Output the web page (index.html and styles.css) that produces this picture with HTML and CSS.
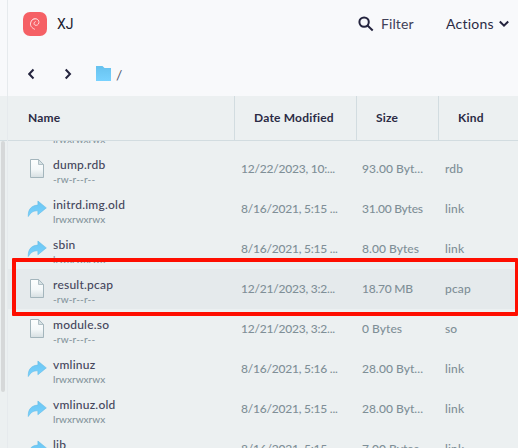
FILE: index.html
```html
<!DOCTYPE html>
<html lang="en">
<head>
<meta charset="utf-8">
<title>XJ</title>
<link rel="stylesheet" href="styles.css">
</head>
<body>
<svg width="0" height="0" class="defs">
  <defs>
    <linearGradient id="paper" x1="0" y1="0" x2="0" y2="1"><stop offset="0" stop-color="#fdfefe"/><stop offset=".55" stop-color="#f4f8f9"/><stop offset="1" stop-color="#d6dfe2"/></linearGradient>
    <linearGradient id="blue" x1="0" y1="0" x2="0" y2="1"><stop offset="0" stop-color="#6bc5f1"/><stop offset="1" stop-color="#78d2ff"/></linearGradient>
    <symbol id="file" viewBox="0 0 20 22"><path d="M3.500 1.500h8.100l4.900 5v13H3.500z" fill="url(#paper)" stroke="#a3b5bc"/><path d="M11.500 1.500v5h5z" fill="#d7e2e5" stroke="#a3b5bc" stroke-width=".8"/></symbol>
    <symbol id="link" viewBox="0 0 20 22"><path d="M10.900 3 19.300 9.900l-8.400 6.800v-3.900C6.600 12.600 3.800 14.300 1.300 18.500.8 11.600 4.300 7.400 10.900 7.100z" fill="url(#blue)" stroke="#63bce8" stroke-width=".6"/></symbol>
  </defs>
</svg>
<div class="app">
  <aside class="gutter">
    <div class="gutter-top"></div>
    <div class="gutter-head"></div>
    <div class="gutter-body"><div class="thumb"></div></div>
  </aside>
  <main class="panel">
    <header class="titlebar">
      <div class="host">
        <div class="logo"><svg width="24" height="24" viewBox="0 0 24 24" fill="none" stroke="#ffe5e6" stroke-width=".9" stroke-linecap="round"><path d="M11.500 17.200C8.500 15.800 7 13.600 7.600 11 8.200 8 10.200 6.500 12.600 6.700c2.200.2 3.600 1.900 3.300 4-.3 2.100-2.400 3.200-4 2.400-1.300-.7-1.300-2.900.4-3.500"/><path d="M9 8.200c1-1.200 2.500-1.700 4-1.300" stroke-width=".6"/></svg></div>
        <span class="host-name">XJ</span>
      </div>
      <div class="tools">
        <svg width="16" height="16" viewBox="0 0 16 16" fill="none" stroke="#24243e" stroke-width="2"><circle cx="6.100" cy="6.100" r="4.700"/><path d="m9.500 9.500 5.200 5"/></svg>
        <span class="filter">Filter</span>
        <span class="actions">Actions</span>
        <svg width="10" height="8" viewBox="0 0 10 8" fill="none" stroke="#24243e" stroke-width="2"><path d="m.8 1.500 4.200 4.200 4.200-4.200"/></svg>
      </div>
    </header>
    <nav class="pathbar">
      <svg class="back" width="8" height="12" viewBox="0 0 8 12" fill="none" stroke="#24243e" stroke-width="2"><path d="M5.500 1.500 1.200 6 5.500 10.500"/></svg>
      <svg class="fwd" width="8" height="12" viewBox="0 0 8 12" fill="none" stroke="#24243e" stroke-width="2"><path d="M1.700 1.500 6 6 1.700 10.500"/></svg>
      <svg class="folder" width="16" height="16" viewBox="0 0 16 16"><path d="M0 0h6.500l2 2H15v13H0z" fill="#67c3f0"/><path d="M0 2.500h15V15H0z" fill="url(#blue)"/></svg>
      <span class="slash">/</span>
    </nav>
    <section class="table">
      <div class="grid head"><div class="h-name">Name</div><div class="h-date">Date Modified</div><div class="h-size">Size</div><div class="h-kind">Kind</div></div>
      <div class="rows">
        <div class="grid row cut"><div class="name"><svg class="icon"></svg><div class="label"><b>&nbsp;</b><small>lrwxrwxrwx</small></div></div></div>
        <div class="grid row"><div class="name"><svg class="icon"><use href="#file"/></svg><div class="label"><b>dump.rdb</b><small class="rw">-rw-r--r--</small></div></div><div class="date">12/22/2023, 10:...</div><div class="size">93.00 Byt...</div><div class="kind">rdb</div></div>
        <div class="grid row"><div class="name"><svg class="icon"><use href="#link"/></svg><div class="label"><b>initrd.img.old</b><small>lrwxrwxrwx</small></div></div><div class="date">8/16/2021, 5:15 ...</div><div class="size full">31.00 Bytes</div><div class="kind">link</div></div>
        <div class="grid row"><div class="name"><svg class="icon"><use href="#link"/></svg><div class="label"><b>sbin</b><small>lrwxrwxrwx</small></div></div><div class="date">8/16/2021, 5:15 ...</div><div class="size">8.00 Bytes</div><div class="kind">link</div></div>
        <div class="grid row selected"><div class="name"><svg class="icon"><use href="#file"/></svg><div class="label"><b>result.pcap</b><small class="rw">-rw-r--r--</small></div></div><div class="date">12/21/2023, 3:2...</div><div class="size full">18.70 MB</div><div class="kind">pcap</div></div>
        <div class="grid row"><div class="name"><svg class="icon"><use href="#file"/></svg><div class="label"><b>module.so</b><small class="rw">-rw-r--r--</small></div></div><div class="date">12/21/2023, 3:2...</div><div class="size">0 Bytes</div><div class="kind">so</div></div>
        <div class="grid row"><div class="name"><svg class="icon"><use href="#link"/></svg><div class="label"><b>vmlinuz</b><small>lrwxrwxrwx</small></div></div><div class="date">8/16/2021, 5:16 ...</div><div class="size">28.00 Byt...</div><div class="kind">link</div></div>
        <div class="grid row"><div class="name"><svg class="icon"><use href="#link"/></svg><div class="label"><b>vmlinuz.old</b><small>lrwxrwxrwx</small></div></div><div class="date">8/16/2021, 5:15 ...</div><div class="size">28.00 Byt...</div><div class="kind">link</div></div>
        <div class="grid row"><div class="name"><svg class="icon"><use href="#link"/></svg><div class="label"><b>lib</b><small>lrwxrwxrwx</small></div></div><div class="date">8/16/2021, 5:15 ...</div><div class="size">7.00 Bytes</div><div class="kind">link</div></div>
      </div>
    </section>
  </main>
  <div class="marker"></div>
</div>
</body>
</html>
```
FILE: styles.css
```css
* { box-sizing: border-box; }
body { margin: 0; font-family: Lato, "Liberation Sans", sans-serif; color: #2b2b45; }
svg { display: block; flex: none; }
.defs { position: absolute; }
.app { position: relative; display: flex; width: 518px; height: 448px; overflow: hidden; background: #f8f9fb; }
.gutter { width: 8px; display: flex; flex-direction: column; border-right: 1px solid #e6eaed; }
.gutter-top { height: 96px; }
.gutter-head { height: 45px; background: #ecf0f1; border-bottom: 1px solid #d2dce0; }
.gutter-body { flex: 1; background: #ecf0f1; padding-left: 1px; }
.thumb { width: 4px; height: 251px; border-radius: 2px; background: #d6d8d9; }
.panel { flex: 1; display: flex; flex-direction: column; min-width: 0; }
.titlebar { height: 48px; display: flex; justify-content: space-between; padding: 0 9px 0 15px; align-items: center; }
.host, .tools { display: flex; align-items: center; }
.logo { width: 24px; height: 24px; border-radius: 7px; background: #f56065; }
.host-name { margin-left: 10px; font: 14px/20px Roboto, sans-serif; color: #20202f; }
.tools { font-size: 14px; line-height: 20px; }
.filter { width: 37px; margin: 0 28px 0 7px; color: #3f4058; letter-spacing: .1px; white-space: nowrap; }
.actions { width: 53px; letter-spacing: .25px; white-space: nowrap; }
.pathbar { height: 48px; display: flex; align-items: center; padding: 4px 0 0 20px; }
.fwd { margin-left: 28px; }
.folder { margin-left: 24px; }
.slash { margin-left: 4px; font-size: 14px; color: #55566a; }
.table { flex: 1; display: flex; flex-direction: column; min-height: 0; background: #ecf0f1; }
.grid { display: grid; grid-template-columns: 226px 122px 82px 80px; }
.head { height: 45px; border-bottom: 1px solid #d2dce0; font-size: 12px; font-weight: 700; line-height: 44px; letter-spacing: .2px; }
.head div + div { border-left: 1px solid #d2dce0; }
.h-name { padding-left: 20px; }
.h-date { padding-left: 19px; }
.h-size { padding-left: 19px; }
.h-kind { padding-left: 19px; }
.rows { flex: 1; min-height: 0; overflow: hidden; }
.row { height: 40px; }
.cut { margin-top: -32px; }
.selected { background: #e5eaec; }
.name { display: flex; padding-left: 19px; }
.icon { width: 20px; height: 22px; margin: 9px 6px 0 0; }
.label { padding-top: 8px; display: flex; flex-direction: column; }
.label b { font-size: 12px; line-height: 16px; font-weight: 500; letter-spacing: .22px; color: #45465c; }
.label small { font-size: 10px; line-height: 12px; font-weight: 500; color: #84949c; }
.label .rw { letter-spacing: .15px; }
.date, .size, .kind { padding-top: 12px; font-size: 12px; line-height: 16px; font-weight: 500; color: #7f8f97; white-space: nowrap; letter-spacing: .15px; }
.date { padding-left: 7px; letter-spacing: -.22px; }
.size { padding-left: 6px; letter-spacing: .05px; }
.size.full { letter-spacing: -.25px; }
.kind { padding-left: 7px; }
.marker { position: absolute; left: 12px; top: 258px; width: 506px; height: 58px; border: 4px solid #fe0e00; border-right-width: 3px; border-radius: 1px; }
```
